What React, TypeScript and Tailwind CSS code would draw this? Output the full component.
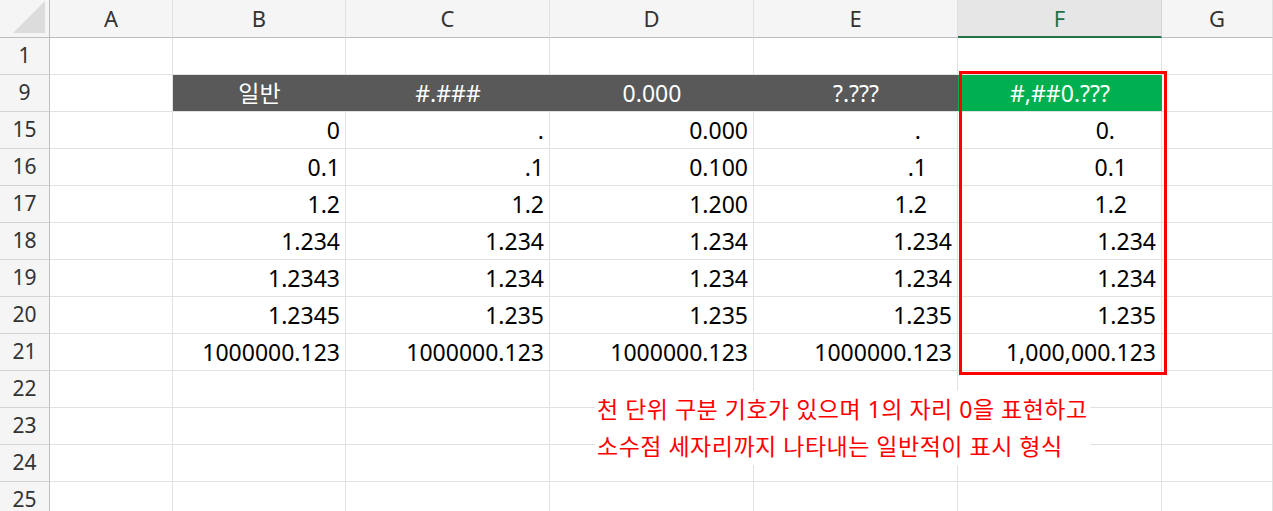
import React from "react";

const cols = [
  { id: "A", w: "w-[123px]" },
  { id: "B", w: "w-[173px]" },
  { id: "C", w: "w-[204px]" },
  { id: "D", w: "w-[204px]" },
  { id: "E", w: "w-[204px]" },
  { id: "F", w: "w-[204px]" },
  { id: "G", w: "w-[111px]" },
];

const heads = ["일반", "#.###", "0.000", "?.???", "#,##0.???"];

const data: [string, string[], string[]][] = [
  ["15", ["0", ".", "0.000", ".", "0."], ["pr-[5px]", "pr-[5px]", "pr-[5px]", "pr-[36px]", "pr-[46px]"]],
  ["16", ["0.1", ".1", "0.100", ".1", "0.1"], ["", "", "", "pr-[30px]", "pr-[34px]"]],
  ["17", ["1.2", "1.2", "1.200", "1.2", "1.2"], ["", "", "", "pr-[30px]", "pr-[34px]"]],
  ["18", ["1.234", "1.234", "1.234", "1.234", "1.234"], ["", "", "", "", ""]],
  ["19", ["1.2343", "1.234", "1.234", "1.234", "1.234"], ["", "", "", "", ""]],
  ["20", ["1.2345", "1.235", "1.235", "1.235", "1.235"], ["", "", "", "", ""]],
  ["21", ["1000000.123", "1000000.123", "1000000.123", "1000000.123", "1,000,000.123"], ["", "", "", "", ""]],
];

const font = { fontFamily: '"Noto Sans", "Noto Sans CJK KR", sans-serif' };

function RowHead({ n }: { n: string }) {
  return (
    <div className="w-[50px] h-[37px] shrink-0 bg-[#f5f5f5] border-r border-r-[#bdbdbd] border-b border-b-[#d4d4d4] flex items-center justify-center text-[21px] text-[#333]">
      {n}
    </div>
  );
}

function Cell({ w, children, cls = "" }: { w: string; children?: React.ReactNode; cls?: string }) {
  return (
    <div className={`${w} h-[37px] shrink-0 border-r border-b border-[#e1e1e1] flex items-center text-[23px] text-black ${cls}`}>
      {children}
    </div>
  );
}

export default function App() {
  return (
    <div className="relative w-[1273px] h-[511px] overflow-hidden bg-white" style={font}>
      {/* column header */}
      <div className="flex h-[38px]">
        <div className="w-[50px] shrink-0 bg-[#f5f5f5] border-r border-b border-[#bdbdbd] relative">
          <div className="absolute right-[4px] bottom-[4px] w-0 h-0 border-l-[32px] border-l-transparent border-b-[32px] border-b-[#dcdcdc]" />
        </div>
        {cols.map((c) =>
          c.id === "F" ? (
            <div key={c.id} className={`${c.w} shrink-0 bg-[#e6e6e6] border-r border-[#d4d4d4] border-b-2 border-b-[#217346] flex items-center justify-center text-[22px] text-[#217346]`}>
              {c.id}
            </div>
          ) : (
            <div key={c.id} className={`${c.w} shrink-0 bg-[#f5f5f5] border-r border-r-[#e1e1e1] border-b border-b-[#bdbdbd] flex items-center justify-center text-[22px] text-[#333]`}>
              {c.id}
            </div>
          )
        )}
      </div>

      {/* row 1 */}
      <div className="flex">
        <RowHead n="1" />
        {cols.map((c) => <Cell key={c.id} w={c.w} />)}
      </div>

      {/* row 9 */}
      <div className="flex">
        <RowHead n="9" />
        <Cell w={cols[0].w} />
        {heads.map((h, i) => (
          <Cell
            key={h}
            w={cols[i + 1].w}
            cls={`justify-center text-white border-r-0 ${i === 4 ? "bg-[#00b050]" : "bg-[#595959]"}`}
          >
            {h}
          </Cell>
        ))}
        <Cell w={cols[6].w} />
      </div>

      {data.map(([n, vals, pads]) => (
        <div key={n} className="flex">
          <RowHead n={n} />
          <Cell w={cols[0].w} />
          {vals.map((v, i) => (
            <Cell key={i} w={cols[i + 1].w} cls={`justify-end ${pads[i] || "pr-[5px]"}`}>
              {v}
            </Cell>
          ))}
          <Cell w={cols[6].w} />
        </div>
      ))}

      {["22", "23", "24", "25"].map((n) => (
        <div key={n} className="flex">
          <RowHead n={n} />
          {cols.map((c) => <Cell key={c.id} w={c.w} />)}
        </div>
      ))}

      {/* highlight box */}
      <div className="absolute left-[959px] top-[71px] w-[208px] h-[304px] border-[3px] border-[#ff0000]" />

      {/* annotation */}
      <div className="absolute left-[595px] top-[391px] text-[23px] leading-[37px] text-[#ff0000] bg-white px-[2px] tracking-[0.5px]">
        <div>천 단위 구분 기호가 있으며 1의 자리 0을 표현하고</div>
        <div>소수점 세자리까지 나타내는 일반적이 표시 형식</div>
      </div>
    </div>
  );
}
